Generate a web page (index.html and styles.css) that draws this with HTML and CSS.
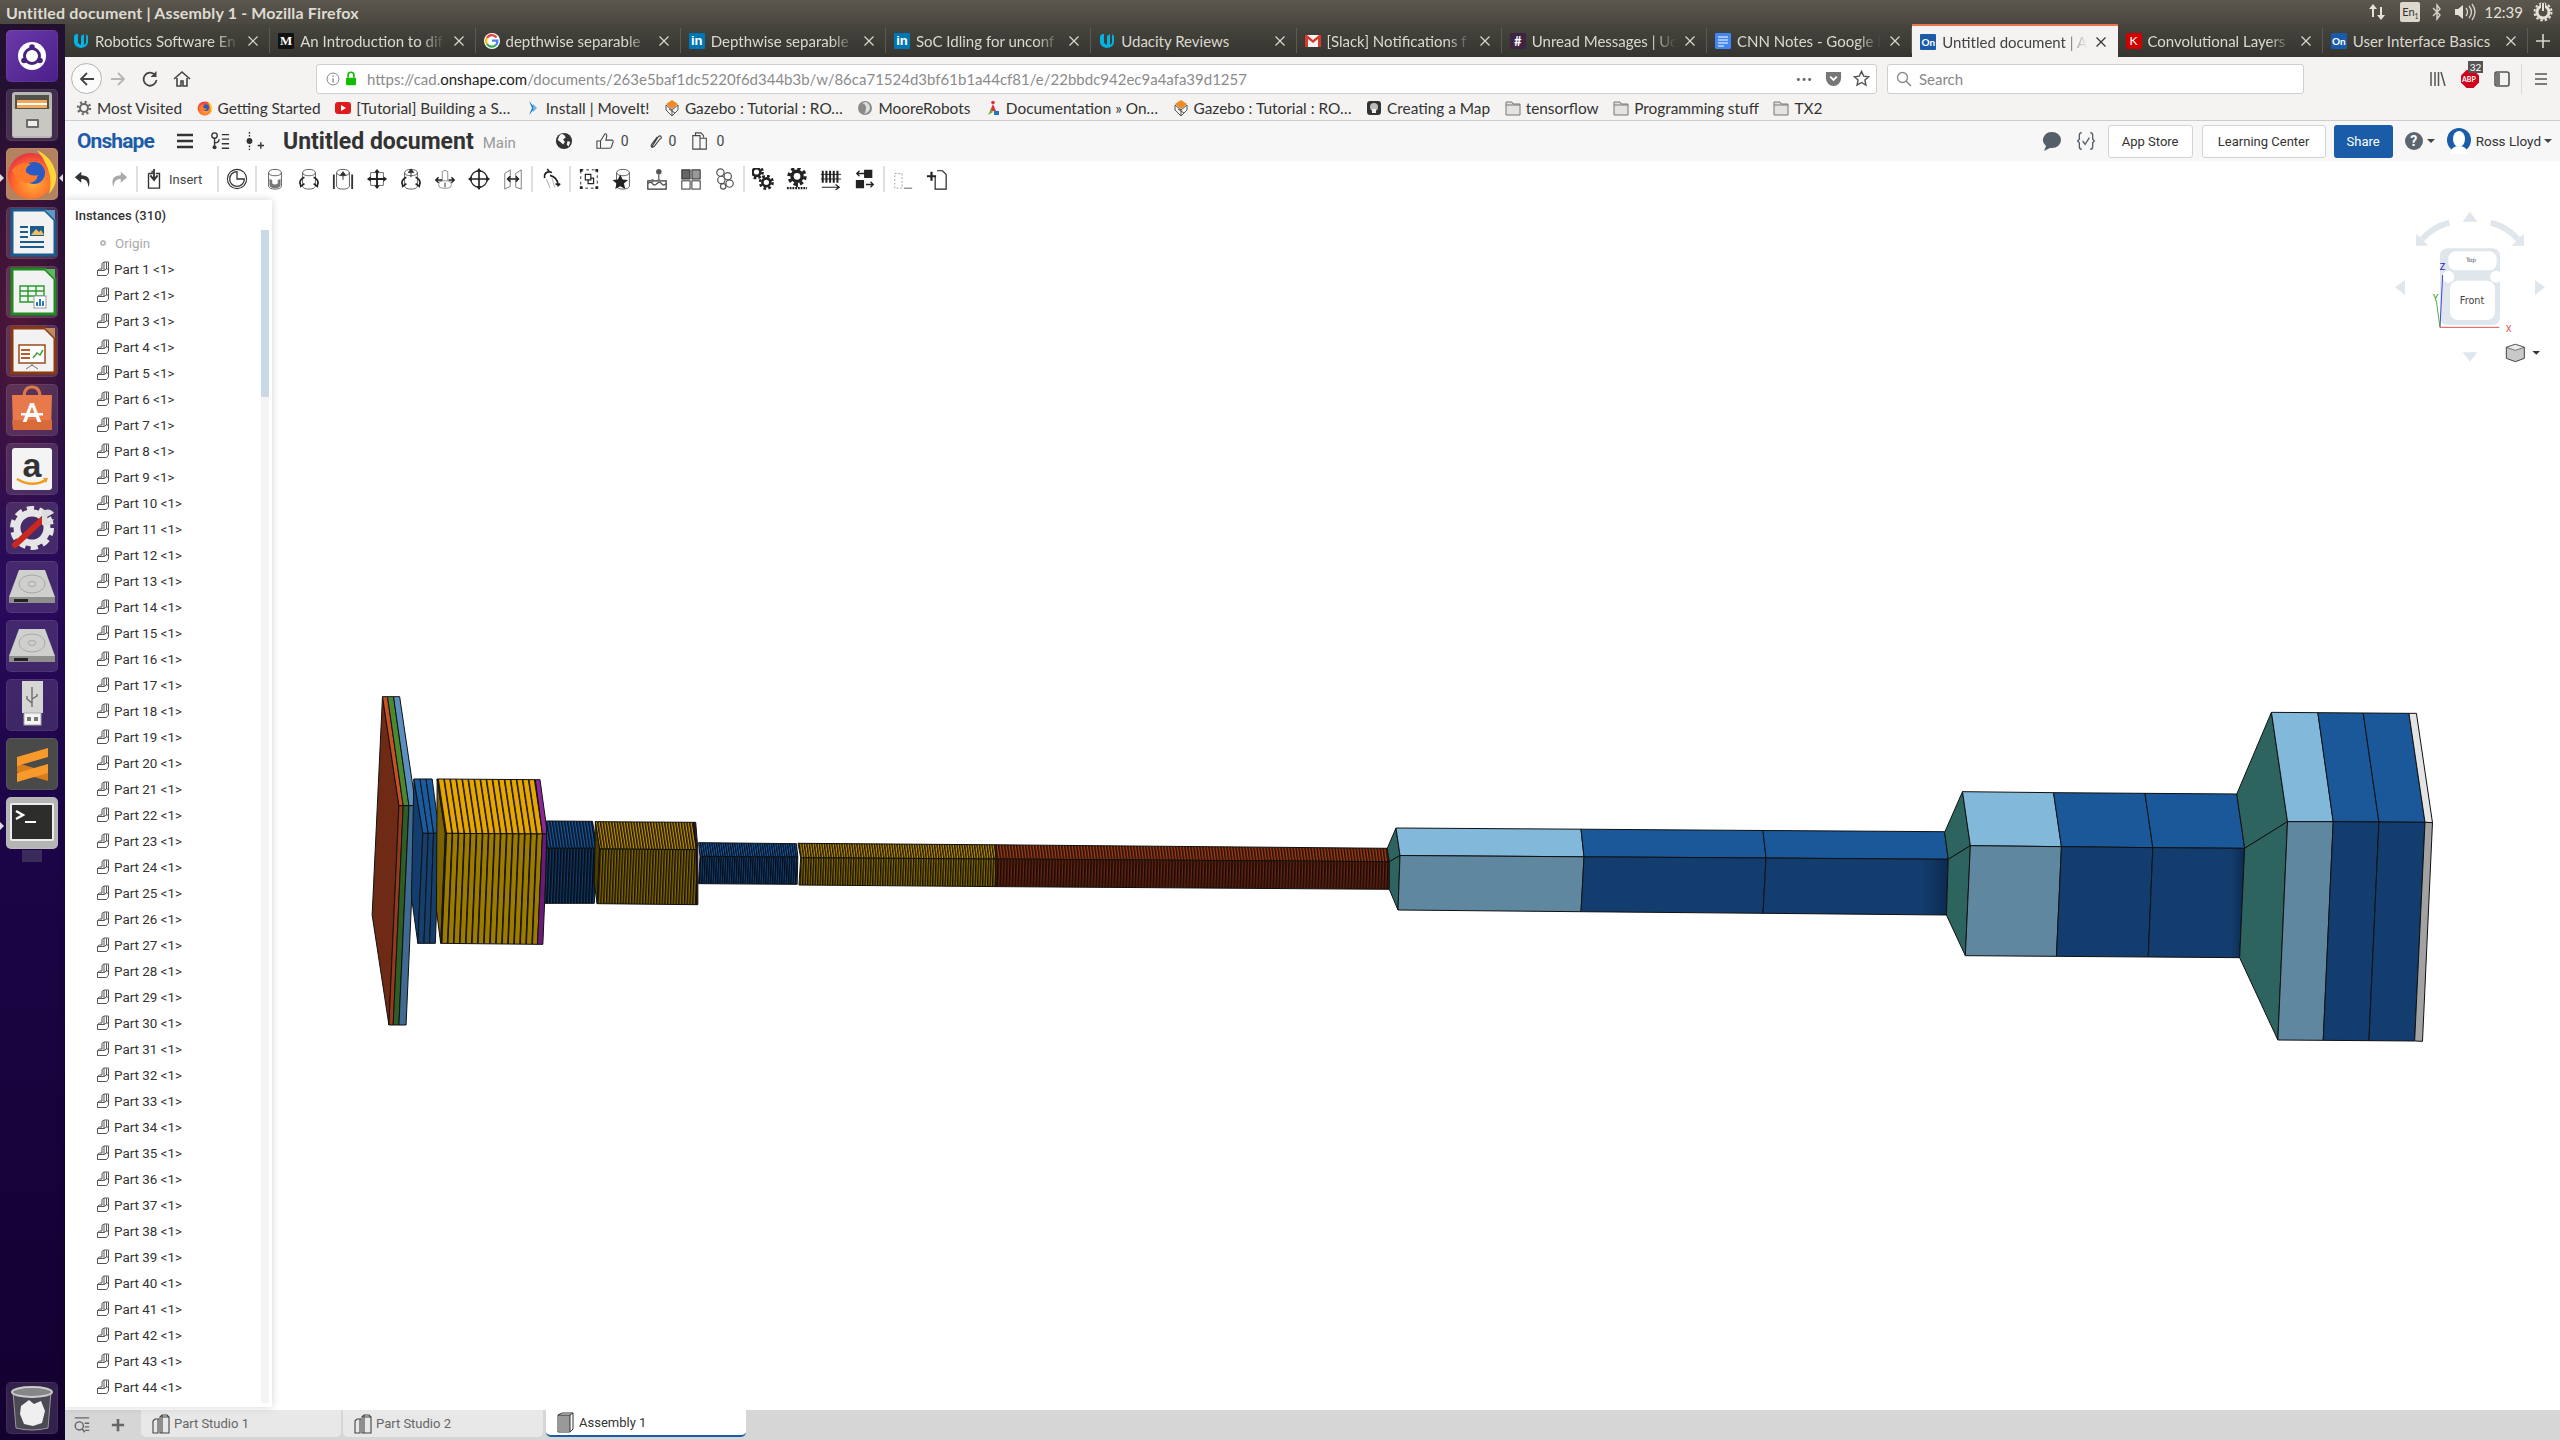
FILE: index.html
```html
<!DOCTYPE html>
<html lang="en">
<head>
    <meta charset="UTF-8">
    <title>Untitled document | Assembly 1 - Mozilla Firefox</title>
    <link rel="stylesheet" href="styles.css">
</head>
<body>
    <div class="titlebar">
        <span class="window-title">Untitled document | Assembly 1 - Mozilla Firefox</span>
        <div class="tray">
            <svg class="tray-updown" viewBox="0 0 18 18"><path d="M5 1 1 6h3v8h2V6h3zM13 17l4-5h-3V4h-2v8H9z" fill="#e4e1d8"/></svg>
            <span class="tray-lang">En<sub>1</sub></span>
            <svg class="tray-bt" viewBox="0 0 10 18"><path d="M1 5l7 7-3 4V2l3 4-7 7" fill="none" stroke="#d8d5cc" stroke-width="1.4"/></svg>
            <svg class="tray-vol" viewBox="0 0 22 18"><path d="M1 6h3l5-4v14l-5-4H1z" fill="#e4e1d8"/><path d="M12 5q3 4 0 8M15 3q5 6 0 12M18 1q6 8 0 16" fill="none" stroke="#d8d5cc" stroke-width="1.3"/></svg>
            <span class="tray-clock">12:39</span>
            <svg class="tray-power" viewBox="0 0 20 20"><circle cx="10" cy="10" r="6" fill="none" stroke="#e4e1d8" stroke-width="3"/><circle cx="10" cy="10" r="8.5" fill="none" stroke="#e4e1d8" stroke-width="2" stroke-dasharray="2.5 2"/><path d="M10 1v8" stroke="#4d4b44" stroke-width="4"/><path d="M10 1v8" stroke="#e4e1d8" stroke-width="2"/></svg>
        </div>
    </div>

    <div class="desk">
        <nav class="launcher">
            <div class="tile tile-ubuntu"><svg viewBox="0 0 52 52"><circle cx="26" cy="26" r="14" fill="#fff"/><circle cx="26" cy="26" r="7.5" fill="none" stroke="#4a2380" stroke-width="3"/><circle cx="26" cy="17" r="2.8" fill="#4a2380"/><circle cx="18" cy="30.5" r="2.8" fill="#4a2380"/><circle cx="34" cy="30.5" r="2.8" fill="#4a2380"/></svg></div>
            <div class="tile"><svg viewBox="0 0 52 52"><rect x="6" y="3" width="40" height="46" rx="3" fill="#b9b7b2"/><rect x="9" y="6" width="34" height="14" fill="#55504a"/><rect x="11" y="11" width="30" height="8" fill="#eea95a"/><rect x="11" y="14" width="30" height="2" fill="#fff"/><path d="M7 20h38v27H7z" fill="#c9c7c2"/><rect x="20" y="30" width="13" height="9" rx="1" fill="#6d6b68"/><rect x="22" y="32" width="9" height="5" fill="#eee"/></svg></div>
            <div class="tile tile-firefox"><svg viewBox="0 0 52 52"><use href="#i-firefox"/></svg></div>
            <div class="tile"><svg viewBox="0 0 52 52"><use href="#i-sheet" class="writer"/><path d="M39 3l10 10V3z" fill="#5b9ac8"/><rect x="14" y="19" width="8" height="2" fill="#1b5c8c"/><rect x="14" y="24" width="8" height="2" fill="#1b5c8c"/><rect x="14" y="29" width="8" height="2" fill="#1b5c8c"/><rect x="24" y="19" width="14" height="10" fill="#1b5c8c"/><path d="M25 28l5-6 3 3 2-2 3 5z" fill="#f0c060"/><rect x="14" y="34" width="24" height="2" fill="#1b5c8c"/><rect x="14" y="39" width="24" height="2" fill="#1b5c8c"/></svg></div>
            <div class="tile"><svg viewBox="0 0 52 52"><use href="#i-sheet" class="calc"/><path d="M39 3l10 10V3z" fill="#5cb85c"/><path d="M14 20h24v16H14zM14 25h24M14 30h24M22 20v16M30 20v16" fill="none" stroke="#2b9a2b" stroke-width="1.4"/><rect x="28" y="30" width="12" height="12" fill="#fff" stroke="#999"/><path d="M31 40v-4M34 40v-7M37 40v-5" stroke="#2a7ab8" stroke-width="2"/></svg></div>
            <div class="tile"><svg viewBox="0 0 52 52"><use href="#i-sheet" class="impress"/><path d="M39 3l10 10V3z" fill="#c08a60"/><rect x="13" y="20" width="26" height="18" fill="#fff" stroke="#9c4a1c" stroke-width="1.5"/><rect x="15" y="24" width="9" height="2" fill="#b5602c"/><rect x="15" y="28" width="9" height="2" fill="#b5602c"/><rect x="15" y="32" width="9" height="2" fill="#b5602c"/><path d="M27 33l4-5 3 2 3-5" fill="none" stroke="#4a9a3a" stroke-width="1.5"/><path d="M26 38v3M26 40l-6 4M26 40l6 4" stroke="#777"/></svg></div>
            <div class="tile"><svg viewBox="0 0 52 52"><path d="M18 13q0-10 8-10t8 10" fill="none" stroke="#d97a48" stroke-width="3"/><path d="M6 11h40l-1 35H7z" fill="#e8794a"/><path d="M6 36h40v10H7z" fill="#d96a3a"/><text x="26" y="38" class="software-a">A</text><rect x="15" y="29" width="22" height="2.5" fill="#fff"/></svg></div>
            <div class="tile"><svg viewBox="0 0 52 52"><rect x="6" y="5" width="40" height="42" rx="3" fill="#f4f4f4"/><text x="26" y="34" class="amazon-a">a</text><path d="M11 36q15 9 29 1" fill="none" stroke="#f39a1e" stroke-width="2.5"/><path d="M37 35l5 0-2 5z" fill="#f39a1e"/></svg></div>
            <div class="tile"><svg viewBox="0 0 52 52"><circle cx="26" cy="26" r="15" fill="none" stroke="#e6e6e6" stroke-width="7"/><circle cx="26" cy="26" r="19" fill="none" stroke="#e6e6e6" stroke-width="6" stroke-dasharray="7 5"/><path d="M9 43 38 16" stroke="#c8281e" stroke-width="6" stroke-linecap="round"/><path d="M36 9q8-4 12 2l-7 4 1 4 6-2q-3 8-12 6z" fill="#ddd"/></svg></div>
            <div class="tile"><svg viewBox="0 0 52 52"><use href="#i-drive"/></svg></div>
            <div class="tile"><svg viewBox="0 0 52 52"><use href="#i-drive"/></svg></div>
            <div class="tile"><svg viewBox="0 0 52 52"><rect x="16" y="2" width="21" height="32" fill="#d6d6d4"/><rect x="18" y="34" width="17" height="12" fill="#f4f4f4" stroke="#aaa"/><rect x="21" y="38" width="4" height="4" fill="#777"/><rect x="28" y="38" width="4" height="4" fill="#777"/><path d="M26 8v20M26 24l-5-4v-3M26 20l5-3v-2" stroke="#666" fill="none" stroke-width="1.3"/></svg></div>
            <div class="tile tile-sublime"><svg viewBox="0 0 52 52"><path d="M11 25 42 34v9L11 34z" fill="#d97c1a"/><path d="M11 19 42 10v9L11 28z" fill="#f79a2b"/><path d="M11 35 42 26v9L11 44z" fill="#f79a2b"/></svg></div>
            <div class="tile tile-terminal"><svg viewBox="0 0 52 52"><rect x="4" y="6" width="44" height="38" rx="2" fill="#ececec"/><rect x="6" y="8" width="40" height="34" fill="#2d2d2b"/><path d="M10 14l7 4-7 4" fill="none" stroke="#fff" stroke-width="2.4"/><rect x="19" y="24" width="11" height="2" fill="#fff"/></svg></div>
            <div class="tile tile-trash"><svg viewBox="0 0 52 52"><path d="M7 10h38l-3 36q-16 4-32 0z" fill="#4a4a52" stroke="#999"/><ellipse cx="26" cy="10" rx="20" ry="5" fill="#85858a" stroke="#ccc" stroke-width="2"/><path d="M15 24l8-6 5 4 7-3 4 10-3 12-9 3-9-2-4-10z" fill="#efefef"/></svg></div>
            <i class="pip pip-left pip-firefox"></i>
            <i class="pip pip-right pip-firefox"></i>
            <i class="pip pip-left pip-terminal"></i>
            <i class="term-tag"></i>
        </nav>

        <div class="browser">
            <div class="tabstrip">
                <div class="tab"><svg class="fav" viewBox="0 0 16 16"><use href="#f-udacity"/></svg><span class="tab-label">Robotics Software En</span><svg class="tab-x" viewBox="0 0 10 10"><use href="#i-x"/></svg></div>
                <div class="tab"><span class="fav fav-medium">M</span><span class="tab-label">An Introduction to dif</span><svg class="tab-x" viewBox="0 0 10 10"><use href="#i-x"/></svg></div>
                <div class="tab"><svg class="fav" viewBox="0 0 16 16"><circle cx="8" cy="8" r="8" fill="#fff"/><path d="M12.5 4.5A5.6 5.6 0 0 0 3 5" fill="none" stroke="#ea4335" stroke-width="2.2"/><path d="M3 5a5.6 5.6 0 0 0 0 6" fill="none" stroke="#fbbc05" stroke-width="2.2"/><path d="M3 11a5.6 5.6 0 0 0 9 .8" fill="none" stroke="#34a853" stroke-width="2.2"/><path d="M8 7.6h5.4q0 3-1.4 4.4" fill="none" stroke="#4285f4" stroke-width="2.2"/></svg><span class="tab-label">depthwise separable</span><svg class="tab-x" viewBox="0 0 10 10"><use href="#i-x"/></svg></div>
                <div class="tab"><span class="fav fav-in">in</span><span class="tab-label">Depthwise separable</span><svg class="tab-x" viewBox="0 0 10 10"><use href="#i-x"/></svg></div>
                <div class="tab"><span class="fav fav-in">in</span><span class="tab-label">SoC Idling for unconf</span><svg class="tab-x" viewBox="0 0 10 10"><use href="#i-x"/></svg></div>
                <div class="tab"><svg class="fav" viewBox="0 0 16 16"><use href="#f-udacity"/></svg><span class="tab-label tab-label-full">Udacity Reviews</span><svg class="tab-x" viewBox="0 0 10 10"><use href="#i-x"/></svg></div>
                <div class="tab"><svg class="fav" viewBox="0 0 16 16"><rect y="2" width="16" height="12" fill="#f4f4f4"/><path d="M0 2v12h3V6l5 4 5-4v8h3V2h-2L8 7 2 2z" fill="#d9382c"/></svg><span class="tab-label">[Slack] Notifications f</span><svg class="tab-x" viewBox="0 0 10 10"><use href="#i-x"/></svg></div>
                <div class="tab"><span class="fav fav-slack">#</span><span class="tab-label">Unread Messages | Uc</span><svg class="tab-x" viewBox="0 0 10 10"><use href="#i-x"/></svg></div>
                <div class="tab"><svg class="fav" viewBox="0 0 16 16"><rect width="16" height="16" rx="1" fill="#4285f4"/><path d="M3 4h10M3 7h10M3 10h10M3 13h6" stroke="#fff" stroke-width="1.2"/></svg><span class="tab-label">CNN Notes - Google D</span><svg class="tab-x" viewBox="0 0 10 10"><use href="#i-x"/></svg></div>
                <div class="tab tab-active"><span class="fav fav-on">On</span><span class="tab-label">Untitled document | A</span><svg class="tab-x" viewBox="0 0 10 10"><use href="#i-x"/></svg></div>
                <div class="tab"><span class="fav fav-k">K</span><span class="tab-label">Convolutional Layers</span><svg class="tab-x" viewBox="0 0 10 10"><use href="#i-x"/></svg></div>
                <div class="tab"><span class="fav fav-on">On</span><span class="tab-label tab-label-full">User Interface Basics</span><svg class="tab-x" viewBox="0 0 10 10"><use href="#i-x"/></svg></div>
                <svg class="tab-new" viewBox="0 0 14 14"><path d="M7 0v14M0 7h14" stroke="#d8d5cc" stroke-width="1.6"/></svg>
            </div>

            <div class="navbar">
                <div class="nav-back"><svg viewBox="0 0 18 18"><path d="M16 9H3M9 3 3 9l6 6" fill="none" stroke="#444" stroke-width="1.8"/></svg></div>
                <svg class="nav-icon nav-forward" viewBox="0 0 18 18"><path d="M2 9h13M9 3l6 6-6 6" fill="none" stroke="#b5b5b5" stroke-width="1.8"/></svg>
                <svg class="nav-icon nav-reload" viewBox="0 0 18 18"><path d="M14 5a6.5 6.5 0 1 0 1.5 5" fill="none" stroke="#444" stroke-width="1.8"/><path d="M15.5 1v6h-6" fill="#444"/></svg>
                <svg class="nav-icon nav-home" viewBox="0 0 18 18"><path d="M1 9l8-7 8 7M4 8v8h4v-5h2v5h4V8" fill="none" stroke="#444" stroke-width="1.6"/></svg>
                <div class="urlbar">
                    <svg class="url-info" viewBox="0 0 16 16"><circle cx="8" cy="8" r="6.8" fill="none" stroke="#777"/><path d="M8 7v5M8 4v1.6" stroke="#777" stroke-width="1.3"/></svg>
                    <svg class="url-lock" viewBox="0 0 14 18"><path d="M3.5 8V5a3.5 3.5 0 0 1 7 0v3" fill="none" stroke="#12bc00" stroke-width="2"/><rect x="1" y="8" width="12" height="9" rx="1" fill="#12bc00"/></svg>
                    <span class="url-text">https://cad.<b>onshape.com</b>/documents/263e5baf1dc5220f6d344b3b/w/86ca71524d3bf61b1a44cf81/e/22bbdc942ec9a4afa39d1257</span>
                    <span class="url-dots">•••</span>
                    <svg class="url-pocket" viewBox="0 0 18 18"><path d="M1 2h16v7a8 8 0 0 1-16 0z" fill="#777"/><path d="M5.5 7 9 10.5 12.5 7" fill="none" stroke="#fff" stroke-width="2"/></svg>
                    <svg class="url-star" viewBox="0 0 18 18"><path d="M9 1.500l2.300 5 5.200.6-3.900 3.500 1.100 5.300L9 13.200 4.300 15.900l1.100-5.300L1.500 7.100l5.200-.6z" fill="none" stroke="#555" stroke-width="1.5"/></svg>
                </div>
                <div class="searchbar">
                    <svg viewBox="0 0 16 16"><circle cx="6.5" cy="6.5" r="5" fill="none" stroke="#888" stroke-width="1.3"/><path d="M10 10l5 5" stroke="#888" stroke-width="1.5"/></svg>
                    <span>Search</span>
                </div>
                <svg class="nav-icon nav-library" viewBox="0 0 18 18"><path d="M2 2v14M6 2v14M9.5 2v14M12 2l4 14" stroke="#555" stroke-width="1.5" fill="none"/></svg>
                <div class="abp">
                    <svg viewBox="0 0 18 18"><path d="M5.500 0h7L18 5.500v7L12.500 18h-7L0 12.500v-7z" fill="#d0021b"/></svg>
                    <span class="abp-word">ABP</span>
                    <span class="abp-count">32</span>
                </div>
                <svg class="nav-icon nav-sidebar" viewBox="0 0 18 18"><rect x="2" y="2" width="14" height="14" rx="2" fill="none" stroke="#555" stroke-width="1.6"/><rect x="3" y="3" width="4" height="12" fill="#777"/></svg>
                <i class="nav-sep"></i>
                <svg class="nav-icon nav-menu" viewBox="0 0 14 14"><path d="M1 2h12M1 7h12M1 12h12" stroke="#555" stroke-width="1.6"/></svg>
            </div>

            <div class="bookmarks">
                <a class="bm"><svg viewBox="0 0 16 16"><circle cx="8" cy="8" r="4" fill="none" stroke="#666" stroke-width="2"/><circle cx="8" cy="8" r="6" fill="none" stroke="#666" stroke-width="2.5" stroke-dasharray="2 2.7"/></svg>Most Visited</a>
                <a class="bm"><svg viewBox="0 0 52 52"><use href="#i-firefox"/></svg>Getting Started</a>
                <a class="bm"><svg viewBox="0 0 16 16"><rect y="2" width="16" height="12" rx="3" fill="#e01b1b"/><path d="M6 5l5 3-5 3z" fill="#fff"/></svg>[Tutorial] Building a S…</a>
                <a class="bm"><svg viewBox="0 0 16 16"><path d="M4 1l6 7-6 7 3-7z" fill="#2b7bb9"/><path d="M8 4l4 4-4 4z" fill="#64b5e8"/></svg>Install | MoveIt!</a>
                <a class="bm"><svg viewBox="0 0 16 16"><use href="#f-gazebo"/></svg>Gazebo : Tutorial : RO…</a>
                <a class="bm"><svg viewBox="0 0 16 16"><circle cx="8" cy="8" r="7" fill="#8a8a8a"/><path d="M5 3q4 1 4 5t-2 6q6-2 6-6t-4-6z" fill="#ddd"/></svg>MooreRobots</a>
                <a class="bm"><svg viewBox="0 0 16 16"><circle cx="8" cy="2.5" r="1.8" fill="#d33"/><path d="M8 4l3 7H5z" fill="#d33"/><path d="M3 15l3-6 2 3z" fill="#6a4"/><path d="M9 11h5v4H9z" fill="#27b"/></svg>Documentation » On…</a>
                <a class="bm"><svg viewBox="0 0 16 16"><use href="#f-gazebo"/></svg>Gazebo : Tutorial : RO…</a>
                <a class="bm"><svg viewBox="0 0 16 16"><rect x="1" y="1" width="14" height="14" rx="3" fill="#333"/><circle cx="8" cy="7" r="4" fill="#bbb"/><path d="M6 13h4V9H6z" fill="#eee"/></svg>Creating a Map</a>
                <a class="bm"><svg viewBox="0 0 16 16"><use href="#f-folder"/></svg>tensorflow</a>
                <a class="bm"><svg viewBox="0 0 16 16"><use href="#f-folder"/></svg>Programming stuff</a>
                <a class="bm"><svg viewBox="0 0 16 16"><use href="#f-folder"/></svg>TX2</a>
            </div>

            <div class="onshape">
                <header class="doc-bar">
                    <span class="logo">Onshape</span>
                    <svg class="doc-icon doc-menu" viewBox="0 0 16 16"><path d="M0 2h16M0 8h16M0 14h16" stroke="#333" stroke-width="2.4"/></svg>
                    <svg class="doc-icon doc-version" viewBox="0 0 22 22"><circle cx="5" cy="5" r="3" fill="none" stroke="#333" stroke-width="1.5"/><circle cx="5" cy="18" r="2.2" fill="#333"/><path d="M5 8v8M5 13q5 0 5-4" fill="none" stroke="#333" stroke-width="1.5"/><path d="M13 4h8M13 9h8M13 14h8M13 19h8" stroke="#333" stroke-width="1.5"/></svg>
                    <svg class="doc-icon doc-config" viewBox="0 0 22 22"><circle cx="6" cy="11" r="3.2" fill="#333"/><path d="M6 1v5M6 16v5" stroke="#333" stroke-width="1.5" stroke-dasharray="2 1.5"/><path d="M15 16h7M18.5 12.5v7" stroke="#333" stroke-width="1.5"/></svg>
                    <h1 class="doc-name">Untitled document</h1>
                    <span class="doc-branch">Main</span>
                    <svg class="doc-icon doc-globe" viewBox="0 0 20 20"><circle cx="10" cy="10" r="9" fill="#333"/><path d="M7 2q4 1 5 4l-3 2 2 3-2 3-3-3-3-2q1-5 4-7zM14 10l3 1-2 5-2-2z" fill="#f7f7f7"/></svg>
                    <svg class="doc-icon doc-thumb" viewBox="0 0 20 20"><path d="M1 10h4v8H1zM5 10l5-8q2 0 2 2l-1 5h7q1 0 1 2l-2 6q0 1-2 1H5" fill="none" stroke="#444" stroke-width="1.2"/></svg>
                    <span class="doc-count">0</span>
                    <svg class="doc-icon doc-link" viewBox="0 0 16 16"><path d="M5 14 12 3q2-2 3 0T14 5L8 13q-2 2-3 1T5 11l6-8" fill="none" stroke="#444" stroke-width="1.2"/></svg>
                    <span class="doc-count">0</span>
                    <svg class="doc-icon doc-clip" viewBox="0 0 18 20"><path d="M4 4V1h6l3 3v2M1 4h8v15H1zM9 7h7v12H9" fill="none" stroke="#444" stroke-width="1.2"/></svg>
                    <span class="doc-count">0</span>

                    <svg class="doc-icon doc-comment" viewBox="0 0 20 20"><path d="M10 1a9 8 0 0 1 0 16H8l-6 3 2-5A9 8 0 0 1 10 1z" fill="#555f6a"/></svg>
                    <svg class="doc-icon doc-fs" viewBox="0 0 24 24"><path d="M7 2q-3 0-3 3v5l-2 2 2 2v5q0 3 3 3M17 2q3 0 3 3v5l2 2-2 2v5q0 3-3 3" fill="none" stroke="#555f6a" stroke-width="1.6"/><path d="M8 12l3 4 5-8" fill="none" stroke="#555f6a" stroke-width="1.6"/></svg>
                    <button class="btn btn-store">App Store</button>
                    <button class="btn btn-learn">Learning Center</button>
                    <button class="btn btn-share">Share</button>
                    <span class="help">?</span>
                    <i class="caret caret-help"></i>
                    <svg class="avatar" viewBox="0 0 24 26"><ellipse cx="12" cy="12" rx="12" ry="12" fill="#1a5ca8"/><ellipse cx="12" cy="11" rx="6" ry="8" fill="#fff"/><path d="M3 26q1-8 9-8t9 8z" fill="#fff"/></svg>
                    <span class="user">Ross Lloyd</span>
                    <i class="caret"></i>
                </header>

                <div class="toolbar">
                    <button class="tool"><svg viewBox="0 0 24 24"><use href="#t-undo"/></svg></button>
                    <button class="tool tool-off"><svg viewBox="0 0 24 24"><use href="#t-redo"/></svg></button>
                    <i class="tool-sep"></i>
                    <button class="tool tool-insert"><svg viewBox="0 0 24 24"><path d="M6 6h4V3M14 6h4v16H6V6" fill="none" stroke="#333" stroke-width="1.5"/><path d="M12 1v11M8 8l4 5 4-5" fill="none" stroke="#333" stroke-width="2"/></svg>Insert</button>
                    <i class="tool-sep"></i>
                    <button class="tool"><svg viewBox="0 0 24 24"><circle cx="12" cy="12" r="10.5" fill="none" stroke="#333" stroke-width="1.2"/><path d="M12 4a8 8 0 1 0 8 8h-8z" fill="none" stroke="#333" stroke-width="1.4"/></svg></button>
                    <i class="tool-sep"></i>
                    <button class="tool"><svg viewBox="0 0 24 24"><use href="#t-cyl"/><path d="M6 12q6 3 12 0v7q-1 3-6 3t-6-3z" fill="#777"/><path d="M9 13v4q3 2 6 0v-4" fill="#fff"/></svg></button>
                    <button class="tool"><svg viewBox="0 0 24 24"><use href="#t-cyl"/><use href="#t-arrows"/></svg></button>
                    <button class="tool"><svg viewBox="0 0 24 24"><use href="#t-cyl"/><path d="M2 7v16M22 7v16" stroke="#333" stroke-width="2"/><path d="M12 13V5M9 8l3-4 3 4z" stroke="#333" fill="#333"/></svg></button>
                    <button class="tool"><svg viewBox="0 0 24 24"><path d="M5 5h14v14H5zM5 12h14M12 5v14" fill="none" stroke="#666"/><path d="M12 1l-3 4h6zM12 23l-3-4h6zM1 12l4-3v6zM23 12l-4-3v6z" fill="#222"/><path d="M12 4v16M4 12h16" stroke="#222" stroke-width="2"/></svg></button>
                    <button class="tool"><svg viewBox="0 0 24 24"><use href="#t-cyl"/><use href="#t-arrows"/><path d="M12 10V3M9 5l3-4 3 4z" stroke="#333" fill="#333"/></svg></button>
                    <button class="tool"><svg viewBox="0 0 24 24"><path d="M9 14V4q3-3 6 0v10M5 18q0-4 4-4h6q4 0 4 4t-4 4H9q-4 0-4-4z" fill="none" stroke="#888"/><path d="M2 13h7M16 13h6M5 10l-3 3 3 3M19 10l3 3-3 3" fill="none" stroke="#222" stroke-width="1.6"/><path d="M12 16v5" stroke="#222"/></svg></button>
                    <button class="tool"><svg viewBox="0 0 24 24"><circle cx="12" cy="12" r="9" fill="none" stroke="#333" stroke-width="1.5"/><path d="M12 1v22M1 12h22" stroke="#222" stroke-width="1.8"/><path d="M12 0l-3 4h6zM12 24l-3-4h6zM0 12l4-3v6zM24 12l-4-3v6z" fill="#222"/></svg></button>
                    <button class="tool"><svg viewBox="0 0 24 24"><path d="M3 6l6-4v18l-6 3zM21 2l-6 4v15l6 2z" fill="none" stroke="#777"/><path d="M6 12h12M9 9l-3 3 3 3M15 9l3 3-3 3" fill="none" stroke="#222" stroke-width="1.6"/></svg></button>
                    <i class="tool-sep"></i>
                    <button class="tool"><svg viewBox="0 0 24 24"><path d="M5 11q-1-6 5-7l-2-3M10 4l3 1" fill="none" stroke="#222" stroke-width="1.8"/><path d="M11 8q8 2 9 11l2-2M20 19l-3-2" fill="none" stroke="#222" stroke-width="1.8"/><path d="M7 12l4 10M13 11l3 10" stroke="#aaa"/></svg></button>
                    <i class="tool-sep"></i>
                    <button class="tool"><svg viewBox="0 0 24 24"><rect x="3" y="2" width="18" height="20" fill="none" stroke="#222" stroke-dasharray="3 3"/><path d="M2 1h3v3H2zM19 1h3v3h-3zM2 20h3v3H2zM19 20h3v3h-3z" fill="#222"/><path d="M8 7h6v6H8zM11 13v4h6v-6h-3" fill="none" stroke="#222" stroke-width="1.3"/></svg></button>
                    <button class="tool"><svg viewBox="0 0 24 24"><use href="#t-cyl"/><path d="M9 7l2.500 5.500 6 .5-4.500 4 1.500 6L9 20l-5.500 3 1.500-6-4.500-4 6-.5z" fill="#222"/></svg></button>
                    <button class="tool"><svg viewBox="0 0 24 24"><circle cx="14" cy="4" r="3" fill="#555"/><path d="M14 7v6" stroke="#222"/><path d="M2 14h20v9H2z" fill="none" stroke="#333" stroke-width="1.3"/><path d="M2 17q3-3 5 0t5 0 5 0 5 0" fill="none" stroke="#555" stroke-width="1.5"/><circle cx="7" cy="14" r="2" fill="#777"/><circle cx="14" cy="14" r="2" fill="#777"/></svg></button>
                    <button class="tool"><svg viewBox="0 0 24 24"><rect x="2" y="2" width="9" height="10" fill="#666" stroke="#222"/><rect x="13" y="2" width="9" height="10" fill="#999" stroke="#222"/><rect x="2" y="14" width="9" height="9" fill="#fff" stroke="#222"/><rect x="13" y="14" width="9" height="9" fill="#fff" stroke="#222"/></svg></button>
                    <button class="tool"><svg viewBox="0 0 24 24"><g fill="none" stroke="#555" stroke-width="1.3"><circle cx="7" cy="5" r="4"/><circle cx="15" cy="9" r="4"/><circle cx="8" cy="13" r="4"/><circle cx="17" cy="17" r="4"/><circle cx="10" cy="20" r="3"/></g></svg></button>
                    <i class="tool-sep"></i>
                    <button class="tool"><svg viewBox="0 0 24 24"><use href="#t-gear" transform="translate(-3.5 -4) scale(.7)"/><use href="#t-gear" transform="translate(7 7) scale(.72)"/></svg></button>
                    <button class="tool"><svg viewBox="0 0 24 24"><use href="#t-gear" transform="translate(1 -2) scale(.92)"/><path d="M1 22h22" stroke="#222" stroke-width="2.4" stroke-dasharray="2 1"/><path d="M12 16v5" stroke="#222" stroke-width="2"/></svg></button>
                    <button class="tool"><svg viewBox="0 0 24 24"><path d="M3 3v13M7 3v13M11 3v13M15 3v13M19 3v13" stroke="#222" stroke-width="2.2"/><path d="M1 7h22M1 12h22" stroke="#222"/><path d="M2 21h18M17 18l4 3-4 3" fill="none" stroke="#222" stroke-width="1.3"/></svg></button>
                    <button class="tool"><svg viewBox="0 0 24 24"><path d="M11 2h9v9h-9zM2 13h9v9H2z" fill="#222"/><path d="M12 6H4M6 3l-3 3 3 3M13 18h8M18 15l3 3-3 3" fill="none" stroke="#222" stroke-width="1.4"/></svg></button>
                    <i class="tool-sep"></i>
                    <button class="tool"><svg viewBox="0 0 24 24"><rect x="3" y="6" width="8" height="16" fill="none" stroke="#999" stroke-dasharray="2 2"/><path d="M13 22h9" stroke="#555"/></svg></button>
                    <button class="tool"><svg viewBox="0 0 24 24"><path d="M12 3h6l4 4v16H10V9" fill="none" stroke="#222" stroke-width="1.3"/><path d="M1 9h10M6 4v10" stroke="#222" stroke-width="2.4"/></svg></button>
                </div>

                <div class="workspace">
                    <aside class="panel">
                        <div class="panel-title">Instances (310)</div>
                        <ul class="instances">
                            <li class="origin"><i class="origin-dot"></i>Origin</li>
                            <li><svg viewBox="0 0 12 16"><use href="#i-part"/></svg>Part 1 &lt;1&gt;</li>
                            <li><svg viewBox="0 0 12 16"><use href="#i-part"/></svg>Part 2 &lt;1&gt;</li>
                            <li><svg viewBox="0 0 12 16"><use href="#i-part"/></svg>Part 3 &lt;1&gt;</li>
                            <li><svg viewBox="0 0 12 16"><use href="#i-part"/></svg>Part 4 &lt;1&gt;</li>
                            <li><svg viewBox="0 0 12 16"><use href="#i-part"/></svg>Part 5 &lt;1&gt;</li>
                            <li><svg viewBox="0 0 12 16"><use href="#i-part"/></svg>Part 6 &lt;1&gt;</li>
                            <li><svg viewBox="0 0 12 16"><use href="#i-part"/></svg>Part 7 &lt;1&gt;</li>
                            <li><svg viewBox="0 0 12 16"><use href="#i-part"/></svg>Part 8 &lt;1&gt;</li>
                            <li><svg viewBox="0 0 12 16"><use href="#i-part"/></svg>Part 9 &lt;1&gt;</li>
                            <li><svg viewBox="0 0 12 16"><use href="#i-part"/></svg>Part 10 &lt;1&gt;</li>
                            <li><svg viewBox="0 0 12 16"><use href="#i-part"/></svg>Part 11 &lt;1&gt;</li>
                            <li><svg viewBox="0 0 12 16"><use href="#i-part"/></svg>Part 12 &lt;1&gt;</li>
                            <li><svg viewBox="0 0 12 16"><use href="#i-part"/></svg>Part 13 &lt;1&gt;</li>
                            <li><svg viewBox="0 0 12 16"><use href="#i-part"/></svg>Part 14 &lt;1&gt;</li>
                            <li><svg viewBox="0 0 12 16"><use href="#i-part"/></svg>Part 15 &lt;1&gt;</li>
                            <li><svg viewBox="0 0 12 16"><use href="#i-part"/></svg>Part 16 &lt;1&gt;</li>
                            <li><svg viewBox="0 0 12 16"><use href="#i-part"/></svg>Part 17 &lt;1&gt;</li>
                            <li><svg viewBox="0 0 12 16"><use href="#i-part"/></svg>Part 18 &lt;1&gt;</li>
                            <li><svg viewBox="0 0 12 16"><use href="#i-part"/></svg>Part 19 &lt;1&gt;</li>
                            <li><svg viewBox="0 0 12 16"><use href="#i-part"/></svg>Part 20 &lt;1&gt;</li>
                            <li><svg viewBox="0 0 12 16"><use href="#i-part"/></svg>Part 21 &lt;1&gt;</li>
                            <li><svg viewBox="0 0 12 16"><use href="#i-part"/></svg>Part 22 &lt;1&gt;</li>
                            <li><svg viewBox="0 0 12 16"><use href="#i-part"/></svg>Part 23 &lt;1&gt;</li>
                            <li><svg viewBox="0 0 12 16"><use href="#i-part"/></svg>Part 24 &lt;1&gt;</li>
                            <li><svg viewBox="0 0 12 16"><use href="#i-part"/></svg>Part 25 &lt;1&gt;</li>
                            <li><svg viewBox="0 0 12 16"><use href="#i-part"/></svg>Part 26 &lt;1&gt;</li>
                            <li><svg viewBox="0 0 12 16"><use href="#i-part"/></svg>Part 27 &lt;1&gt;</li>
                            <li><svg viewBox="0 0 12 16"><use href="#i-part"/></svg>Part 28 &lt;1&gt;</li>
                            <li><svg viewBox="0 0 12 16"><use href="#i-part"/></svg>Part 29 &lt;1&gt;</li>
                            <li><svg viewBox="0 0 12 16"><use href="#i-part"/></svg>Part 30 &lt;1&gt;</li>
                            <li><svg viewBox="0 0 12 16"><use href="#i-part"/></svg>Part 31 &lt;1&gt;</li>
                            <li><svg viewBox="0 0 12 16"><use href="#i-part"/></svg>Part 32 &lt;1&gt;</li>
                            <li><svg viewBox="0 0 12 16"><use href="#i-part"/></svg>Part 33 &lt;1&gt;</li>
                            <li><svg viewBox="0 0 12 16"><use href="#i-part"/></svg>Part 34 &lt;1&gt;</li>
                            <li><svg viewBox="0 0 12 16"><use href="#i-part"/></svg>Part 35 &lt;1&gt;</li>
                            <li><svg viewBox="0 0 12 16"><use href="#i-part"/></svg>Part 36 &lt;1&gt;</li>
                            <li><svg viewBox="0 0 12 16"><use href="#i-part"/></svg>Part 37 &lt;1&gt;</li>
                            <li><svg viewBox="0 0 12 16"><use href="#i-part"/></svg>Part 38 &lt;1&gt;</li>
                            <li><svg viewBox="0 0 12 16"><use href="#i-part"/></svg>Part 39 &lt;1&gt;</li>
                            <li><svg viewBox="0 0 12 16"><use href="#i-part"/></svg>Part 40 &lt;1&gt;</li>
                            <li><svg viewBox="0 0 12 16"><use href="#i-part"/></svg>Part 41 &lt;1&gt;</li>
                            <li><svg viewBox="0 0 12 16"><use href="#i-part"/></svg>Part 42 &lt;1&gt;</li>
                            <li><svg viewBox="0 0 12 16"><use href="#i-part"/></svg>Part 43 &lt;1&gt;</li>
                            <li><svg viewBox="0 0 12 16"><use href="#i-part"/></svg>Part 44 &lt;1&gt;</li>
                        </ul>
                        <div class="scroll-track"><div class="scroll-thumb"></div></div>
                    </aside>

                    <!-- the model: two groups keep the units they were measured in -->
                    <svg class="model" viewBox="340 670 2130 400">
                        <defs>
                            <pattern id="yTop" width="16.9" height="10" patternUnits="userSpaceOnUse" patternTransform="translate(226 0) skewX(8)"><rect width="16.9" height="10" fill="#e6a800"/><rect width="5" height="10" fill="#2a2000"/></pattern>
                            <pattern id="ySide" width="16.9" height="10" patternUnits="userSpaceOnUse" patternTransform="translate(315 0) skewX(-2.3)"><rect width="16.9" height="10" fill="#9c7c00"/><rect width="5" height="10" fill="#1e1800"/></pattern>
                            <pattern id="dbTop" width="8.4" height="10" patternUnits="userSpaceOnUse" patternTransform="skewX(8)"><rect width="8.4" height="10" fill="#1a5a9e"/><rect width="4.6" height="10" fill="#04101e"/></pattern>
                            <pattern id="dbSide" width="8.4" height="10" patternUnits="userSpaceOnUse" patternTransform="skewX(-2.3)"><rect width="8.4" height="10" fill="#123a66"/><rect width="4.6" height="10" fill="#020a14"/></pattern>
                            <pattern id="dyTop" width="7.8" height="10" patternUnits="userSpaceOnUse" patternTransform="skewX(8)"><rect width="7.8" height="10" fill="#c29400"/><rect width="4.4" height="10" fill="#1e1600"/></pattern>
                            <pattern id="dySide" width="7.8" height="10" patternUnits="userSpaceOnUse" patternTransform="skewX(-2.3)"><rect width="7.8" height="10" fill="#846800"/><rect width="4" height="10" fill="#141000"/></pattern>
                            <pattern id="b2Top" width="6.4" height="10" patternUnits="userSpaceOnUse" patternTransform="skewX(8)"><rect width="6.4" height="10" fill="#1a5a9e"/><rect width="3.6" height="10" fill="#04101e"/></pattern>
                            <pattern id="b2Side" width="6.4" height="10" patternUnits="userSpaceOnUse" patternTransform="skewX(-2.3)"><rect width="6.4" height="10" fill="#133c6c"/><rect width="3.6" height="10" fill="#030b16"/></pattern>
                            <pattern id="y2Top" width="2.5" height="10" patternUnits="userSpaceOnUse" patternTransform="skewX(8)"><rect width="2.5" height="10" fill="#c29400"/><rect width="1.4" height="10" fill="#1e1600"/></pattern>
                            <pattern id="y2Side" width="2.5" height="10" patternUnits="userSpaceOnUse" patternTransform="skewX(-2.3)"><rect width="2.5" height="10" fill="#846800"/><rect width="1.3" height="10" fill="#141000"/></pattern>
                            <pattern id="rTop" width="3" height="10" patternUnits="userSpaceOnUse" patternTransform="skewX(8)"><rect width="3" height="10" fill="#a5421a"/><rect width="1.7" height="10" fill="#2a0e04"/></pattern>
                            <pattern id="rSide" width="3" height="10" patternUnits="userSpaceOnUse" patternTransform="skewX(-2.3)"><rect width="3" height="10" fill="#642610"/><rect width="1.6" height="10" fill="#1a0804"/></pattern>
                            <linearGradient id="shadeDark" x1="0" x2="1" y1="0" y2="0"><stop offset=".86" stop-color="#133d6e"/><stop offset="1" stop-color="#0c2a50"/></linearGradient>
                        </defs>

                        <g transform="translate(340 670) scale(.35714 .33333)">
                            <polygon fill="#6e2a14" points="119,80 165,407 137,1065 90,735"/>
                            <polygon fill="#c94f24" points="119,80 133,80 177,407 165,407"/>
                            <polygon fill="#96391a" points="165,407 177,407 149,1065 137,1065"/>
                            <polygon fill="#4a8a2c" points="133,80 150,80 193,407 177,407"/>
                            <polygon fill="#2f5e24" points="177,407 193,407 165,1065 149,1065"/>
                            <polygon fill="#5a8fc0" points="150,80 167,80 212,407 193,407"/>
                            <polygon fill="#3f6a92" points="193,407 212,407 185,1065 165,1065"/>

                            <polygon fill="#133d6e" points="207,327 232,490 218,820 200,680"/>
                            <polygon fill="#1a5a9e" points="207,327 224,327 247,490 232,490"/>
                            <polygon fill="#1a5a9e" points="224,327 241,327 262,490 247,490"/>
                            <polygon fill="#1a5a9e" points="241,327 258,327 278,490 262,490"/>
                            <polygon fill="#153f6e" points="232,490 247,490 235,820 218,820"/>
                            <polygon fill="#153f6e" points="247,490 262,490 251,820 235,820"/>
                            <polygon fill="#153f6e" points="262,490 278,490 267,820 251,820"/>

                            <polygon fill="#7a6200" points="272,327 295,490 282,820 270,720"/>
                            <polygon fill="url(#yTop)" points="272,327 547,329 567,492 295,490"/>
                            <polygon fill="url(#ySide)" points="295,490 567,492 553,823 282,820"/>
                            <polygon fill="#8a2a9a" points="547,329 560,329 581,492 567,492"/>
                            <polygon fill="#6a1a78" points="567,492 581,492 568,823 553,823"/>

                            <polygon fill="url(#dbTop)" points="578,453 707,454 720,535 578,535"/>
                            <polygon fill="url(#dbSide)" points="578,535 720,535 712,700 574,700"/>
                            <polygon fill="#4c3c00" points="715,455 727,537 720,701 712,640"/>
                            <polygon fill="url(#dyTop)" points="715,455 990,457 998,539 727,537"/>
                            <polygon fill="url(#dySide)" points="727,537 998,539 998,704 720,701"/>
                            <polygon fill="#3a0f44" points="990,457 996,457 1002,539 1002,704 998,704 998,539"/>
                            <polygon fill="url(#b2Top)" points="1004,518 1278,521 1282,561 1008,559"/>
                            <polygon fill="url(#b2Side)" points="1008,559 1282,561 1280,643 1004,641"/>
                        </g>

                        <polygon fill="url(#y2Top)" points="798,843.3 996,844.8 996,859 800.7,857.7"/>
                        <polygon fill="url(#y2Side)" points="800.7,857.7 996,859 996,886.6 799,885"/>
                        <polygon fill="url(#rTop)" points="996,844.8 1387.3,848.3 1389.3,861.7 996,859"/>
                        <polygon fill="url(#rSide)" points="996,859 1389.3,861.7 1389.3,889.3 996,886.6"/>

                        <polygon fill="#2e6460" points="1387.3,848.3 1396,828 1400,855.5 1389.3,861.7"/>
                        <polygon fill="#2e6460" points="1389.3,861.7 1400,855.5 1398,910 1389.3,889.3"/>
                        <polygon fill="#82b8d9" points="1396,828 1581,829.2 1584,856.8 1400,855.5"/>
                        <polygon fill="#5f879f" points="1400,855.5 1584,856.8 1581,911.7 1398,910"/>
                        <polygon fill="#1a5899" points="1581,829.2 1763,830.5 1766,858 1584,856.8"/>
                        <polygon fill="#133d6e" points="1584,856.8 1766,858 1763,913.3 1581,911.7"/>
                        <polygon fill="#1a5899" points="1763,830.5 1944.6,831.7 1948.2,859.3 1766,858"/>
                        <polygon fill="url(#shadeDark)" points="1766,858 1948.2,859.3 1946.4,915 1763,913.3"/>

                        <g transform="translate(1900 680) scale(.35714 .33333)">
                            <polygon fill="#2e6460" points="125,457 175,335 197,497 135,538"/>
                            <polygon fill="#2e6460" points="135,538 197,497 183,827 130,705"/>
                            <polygon fill="#82b8d9" points="175,335 430,338 452,500 197,497"/>
                            <polygon fill="#5f879f" points="197,497 452,500 438,829 183,827"/>
                            <polygon fill="#1a5899" points="430,338 686,340 708,503 452,500"/>
                            <polygon fill="#133d6e" points="452,500 708,503 695,831 438,829"/>
                            <polygon fill="#1a5899" points="686,340 943,342 965,505 708,503"/>
                            <polygon fill="url(#shadeDark)" points="708,503 965,505 951,833 695,831"/>
                            <polygon fill="#2e6460" points="943,342 1040,97 1085,425 965,505"/>
                            <polygon fill="#2e6460" points="965,505 1085,425 1058,1080 951,833"/>
                            <polygon fill="#82b8d9" points="1040,97 1170,98 1213,425 1085,425"/>
                            <polygon fill="#5f879f" points="1085,425 1213,425 1185,1081 1058,1080"/>
                            <polygon fill="#1a5899" points="1170,98 1297,99 1341,426 1213,425"/>
                            <polygon fill="#133d6e" points="1213,425 1341,426 1313,1082 1185,1081"/>
                            <polygon fill="#1a5899" points="1297,99 1425,100 1470,427 1341,426"/>
                            <polygon fill="#133d6e" points="1341,426 1470,427 1441,1083 1313,1082"/>
                            <polygon fill="#e4e4e4" points="1425,100 1446,100 1491,428 1470,427"/>
                            <polygon fill="#a2a2a2" points="1470,427 1491,428 1463,1084 1441,1083"/>
                        </g>
                    </svg>

                    <svg class="navcube" viewBox="0 0 600 570">
                        <g fill="#dfe6ec">
                            <path d="M330 65l-22 30h44zM105 292l30-22v45zM555 292l-30-22v45zM330 515l-22-28h44z"/>
                            <path d="M168 167l1-36 36 36z"/>
                            <path d="M492 167l-1-36-36 36z"/>
                            <path d="M240 200q0-25 25-25h130q25 0 25 25v180q0 25-25 25H265q-25 0-25-25z"/>
                        </g>
                        <path d="M268 98q-50 13-82 50M392 98q50 13 82 50" fill="none" stroke="#dfe6ec" stroke-width="18"/>
                        <rect x="265" y="184" width="145" height="57" rx="22" fill="#fff"/>
                        <rect x="270" y="272" width="135" height="118" rx="24" fill="#fff"/>
                        <circle cx="265" cy="260" r="18" fill="#fff"/>
                        <circle cx="408" cy="260" r="18" fill="#fff"/>
                        <text x="333" y="216" class="cube-top">Top</text>
                        <text x="336" y="341" class="cube-front">Front</text>
                        <path d="M240 412 248 255" stroke="#2222dd" stroke-width="2.5"/>
                        <path d="M240 412 229 332" stroke="#2ca02c" stroke-width="2.5"/>
                        <path d="M240 412H418" stroke="#e25555" stroke-width="3"/>
                        <text x="248" y="240" class="axis axis-z">Z</text>
                        <text x="227" y="332" class="axis axis-y">Y</text>
                        <text x="446" y="427" class="axis axis-x">X</text>
                        <path d="M466 463l27 9v33l-27 10-27-10v-33z" fill="#c9c9c9" stroke="#444" stroke-width="3"/>
                        <path d="M439 472l27 9 27-9-27-9z" fill="#ececec" stroke="#444" stroke-width="2"/>
                        <path d="M517 483h23l-11 11z" fill="#333"/>
                    </svg>
                </div>

                <footer class="tabbar">
                    <svg class="tabbar-icon tabbar-search" viewBox="0 0 20 20"><path d="M2 2h16M13 8h5M13 12h5M13 16h5" stroke="#666" stroke-width="1.5"/><circle cx="7" cy="11" r="4.5" fill="none" stroke="#666" stroke-width="1.6"/><path d="M10 14l3 4" stroke="#666" stroke-width="1.6"/></svg>
                    <svg class="tabbar-icon tabbar-add" viewBox="0 0 16 16"><path d="M8 1v14M1 8h14" stroke="#666" stroke-width="3"/></svg>
                    <div class="sheet"><svg viewBox="0 0 20 22"><use href="#i-studio"/></svg>Part Studio 1</div>
                    <div class="sheet"><svg viewBox="0 0 20 22"><use href="#i-studio"/></svg>Part Studio 2</div>
                    <div class="sheet sheet-active"><svg viewBox="0 0 20 22"><rect x="3" y="3" width="11" height="16" fill="#999"/><path d="M2 3 6 1h11v16l-3 3H2zM2 3h12v17M14 3l3-2" fill="none" stroke="#333"/></svg>Assembly 1</div>
                </footer>
            </div>
        </div>
    </div>

    <svg class="sprites">
        <defs>
            <radialGradient id="foxBody" cx=".55" cy=".65" r=".7"><stop offset="0" stop-color="#ffb03a"/><stop offset=".6" stop-color="#ff6a2b"/><stop offset="1" stop-color="#e2264c"/></radialGradient>
        </defs>
        <symbol id="i-firefox" viewBox="0 0 52 52">
            <circle cx="25" cy="28" r="23" fill="url(#foxBody)"/>
            <circle cx="28" cy="25" r="11" fill="#2a5bc4"/>
            <path d="M31 2q14 7 18 20t-6 24q6-22-12-44z" fill="#ffd53a"/>
            <path d="M6 22q8-9 19-6-6 3-5 8 5 5 12 3-2 9-12 8-10-2-14-13z" fill="#ff7b2b"/>
        </symbol>
        <symbol id="i-sheet" viewBox="0 0 52 52">
            <path d="M6 3h33l10 10v35H6z" fill="#f2f2f2" stroke="currentColor" stroke-width="3"/>
        </symbol>
        <symbol id="i-drive" viewBox="0 0 52 52">
            <path d="M13 9h26l10 27H3z" fill="#cfcfcd"/>
            <path d="M3 36h46v6H3z" fill="#8e8e8c"/>
            <rect x="8" y="38" width="14" height="3" fill="#222"/>
            <ellipse cx="26" cy="23" rx="13" ry="9" fill="none" stroke="#a8a8a6"/>
            <ellipse cx="26" cy="23" rx="4" ry="2.5" fill="none" stroke="#a8a8a6"/>
        </symbol>
        <symbol id="i-x" viewBox="0 0 10 10"><path d="M.5.5l9 9M9.500.5l-9 9" stroke="currentColor" stroke-width="1.2"/></symbol>
        <symbol id="f-udacity" viewBox="0 0 16 16"><path d="M3 1 1 3v6q0 5 7 6 7-1 7-6V3l-2-2v8q0 2-2 3V1L8 3v9Q5 11 5 9V1z" fill="#02b3e4"/></symbol>
        <symbol id="f-gazebo" viewBox="0 0 16 16"><path d="M8 0l6 4-6 5-6-5z" fill="#f08a24"/><path d="M2 5l6 5 6-5v5l-6 6-6-6z" fill="none" stroke="#555"/><path d="M5 9l6 4M8 10v6" stroke="#555"/></symbol>
        <symbol id="f-folder" viewBox="0 0 16 16"><path d="M1 2h6l1 2h7v11H1z" fill="#e4e3e0" stroke="#777"/><path d="M1 5h14" stroke="#777"/></symbol>
        <symbol id="i-part" viewBox="0 0 12 16"><path d="M.5 9.500 2.500 8H5V2.500L7 1h4.500v11l-2 2.500H.5zM.5 9.500h6.500V2.500L7 1M7 9.500 9.500 8V1.500M9.500 8h2" fill="#fff" stroke="#555"/></symbol>
        <symbol id="i-studio" viewBox="0 0 20 22"><path d="M2 8l2-2h3v14H2zM7 6h1M9 4l2-2h5l2 2v16H9zM11 4h7M11 2v18" fill="none" stroke="#444" stroke-width="1.1"/></symbol>
        <symbol id="t-undo" viewBox="0 0 24 24"><path d="M9 4 2 10l7 6v-4c5 0 7 2 8 9 3-9-1-13-8-13z" fill="#333"/></symbol>
        <symbol id="t-redo" viewBox="0 0 24 24"><path d="M15 4l7 6-7 6v-4c-5 0-7 2-8 9-3-9 1-13 8-13z" fill="#aaa"/></symbol>
        <symbol id="t-cyl" viewBox="0 0 24 24"><ellipse cx="12" cy="5" rx="7" ry="3.5" fill="#fff" stroke="#555"/><path d="M5 5v15q1 3 7 3t7-3V5" fill="none" stroke="#555"/></symbol>
        <symbol id="t-arrows" viewBox="0 0 24 24"><path d="M7 10q-5 2-5 7M2 15l1 5 4-3M17 10q5 2 5 7M22 15l-1 5-4-3" fill="none" stroke="#222" stroke-width="1.8"/></symbol>
        <symbol id="t-gear" viewBox="0 0 24 24"><circle cx="12" cy="12" r="6" fill="none" stroke="#222" stroke-width="4"/><circle cx="12" cy="12" r="9.5" fill="none" stroke="#222" stroke-width="4" stroke-dasharray="4 3.46"/></symbol>
    </svg>
</body>
</html>
```

FILE: styles.css
```css
* {
    box-sizing: border-box;
    margin: 0;
    padding: 0;
}

body {
    width: 2560px;
    height: 1440px;
    overflow: hidden;
    font-family: Lato, 'Noto Sans', sans-serif;
    background: #fff;
}

svg {
    display: block;
    flex: none;
}

.sprites {
    width: 0;
    height: 0;
    overflow: hidden;
}

/* window title + tray */
.titlebar {
    height: 24px;
    display: flex;
    align-items: center;
    padding-left: 6px;
    background: linear-gradient(#5a574e, #4a4840);
}

.window-title {
    font-size: 16px;
    font-weight: 700;
    letter-spacing: .15px;
    color: #dfdbd2;
}

.tray {
    margin-left: auto;
    display: flex;
    align-items: center;
    color: #e4e1d8;
    font-size: 15px;
}

.tray-updown { width: 18px; height: 18px; margin-right: 14px; }
.tray-lang {
    width: 20px;
    height: 20px;
    margin-right: 12px;
    background: #dcd8cc;
    border-radius: 2px;
    color: #333;
    font-size: 11px;
    line-height: 20px;
    text-align: center;
}
.tray-lang sub { font-size: 7px; }
.tray-bt { width: 10px; height: 18px; margin-right: 12px; }
.tray-vol { width: 22px; height: 18px; margin-right: 8px; }
.tray-clock { margin-right: 10px; }
.tray-power { width: 20px; height: 20px; margin-right: 7px; }

.desk {
    display: flex;
    height: 1416px;
}

/* launcher */
.launcher {
    position: relative;
    width: 65px;
    flex: none;
    display: flex;
    flex-direction: column;
    gap: 7px;
    padding: 6px 0 6px 6px;
    background:
        radial-gradient(ellipse 60px 220px at 20px 300px, rgba(130, 30, 50, .45), transparent),
        linear-gradient(#23102f 0, #2b1040 25%, #2a0a5c 40%, #1d0548 55%, #140030 100%);
}

.tile {
    width: 52px;
    height: 52px;
    border-radius: 5px;
    background: rgba(255, 255, 255, .13);
    box-shadow: inset 0 0 0 1px rgba(255, 255, 255, .07);
}

.tile svg { width: 52px; height: 52px; }
.tile-ubuntu { background: linear-gradient(135deg, #6a3aa8, #4a1f8a); }
.tile-firefox { background: #b5825f; }
.tile-sublime { background: #4a4a4a; }
.tile-terminal { background: #b5b5b5; }
.tile-trash { margin-top: auto; }

.writer { color: #1b5c8c; }
.calc { color: #1f8a1f; }
.impress { color: #8a3a10; }

.software-a {
    font: 700 26px Lato, sans-serif;
    fill: #fff;
    text-anchor: middle;
}

.amazon-a {
    font: 700 34px 'Liberation Sans', sans-serif;
    fill: #333;
    text-anchor: middle;
}

.pip {
    position: absolute;
    width: 0;
    height: 0;
    border-top: 4px solid transparent;
    border-bottom: 4px solid transparent;
}
.pip-left { left: 0; border-left: 4px solid #ddd; }
.pip-right { left: 59px; border-right: 4px solid #ddd; }
.pip-firefox { top: 150px; }
.pip-terminal { top: 798px; }

.term-tag {
    position: absolute;
    left: 22px;
    top: 826px;
    width: 20px;
    height: 12px;
    background: #3b2a5c;
}

/* firefox chrome */
.browser {
    flex: 1;
    min-width: 0;
    display: flex;
    flex-direction: column;
}

.tabstrip {
    height: 33px;
    flex: none;
    display: flex;
    background: linear-gradient(#47453e, #35342f);
}

.tab {
    width: 205.25px;
    display: flex;
    align-items: center;
    gap: 6px;
    padding: 0 12px 0 8px;
    font-size: 15px;
    color: #dbd8cf;
    position: relative;
}

.tab::after {
    content: '';
    position: absolute;
    right: 0;
    top: 4px;
    bottom: 4px;
    width: 1px;
    background: #5c5a52;
}

.tab-active {
    background: #f4f3f1;
    color: #444;
    border-top: 2px solid #e9764e;
}
.tab-active::after { display: none; }

.tab-label {
    flex: 1;
    min-width: 0;
    white-space: nowrap;
    -webkit-mask-image: linear-gradient(to right, #000 82%, transparent 98%);
    mask-image: linear-gradient(to right, #000 82%, transparent 98%);
}

.tab-label-full {
    -webkit-mask-image: none;
    mask-image: none;
}

.fav {
    width: 16px;
    height: 16px;
    flex: none;
    display: flex;
    align-items: center;
    justify-content: center;
    font-size: 11px;
    font-weight: 700;
    color: #fff;
    border-radius: 1px;
}

.fav-medium { background: #111; font-family: 'Liberation Serif', serif; font-size: 13px; }
.fav-in { background: #0077b5; font-size: 13px; font-family: 'Liberation Sans', sans-serif; }
.fav-slack { background: #3e2440; font-size: 13px; }
.fav-on { background: #1a5ca8; font-size: 10px; }
.fav-k { background: #d00000; font-size: 12px; font-weight: 400; }

.tab-x {
    width: 10px;
    height: 10px;
    color: #dbd8cf;
}
.tab-active .tab-x { color: #333; }

.tab-new {
    width: 14px;
    height: 14px;
    align-self: center;
    margin-left: 8px;
}

.navbar {
    height: 37px;
    flex: none;
    display: flex;
    align-items: center;
    background: #f4f3f1;
    padding: 6px 0 0 6px;
}

.nav-back {
    width: 31px;
    height: 31px;
    flex: none;
    display: flex;
    align-items: center;
    justify-content: center;
    border: 1px solid #b5b5b5;
    border-radius: 50%;
    background: #fbfbfb;
}

.nav-back svg { width: 18px; height: 18px; }

.nav-icon { width: 18px; height: 18px; }
.nav-forward { margin-left: 7px; }
.nav-reload { margin-left: 14px; }
.nav-home { margin-left: 14px; }

.urlbar {
    width: 1561px;
    height: 30px;
    margin-left: 125px;
    display: flex;
    align-items: center;
    background: #fff;
    border: 1px solid #cfcfcf;
    border-radius: 3px;
    padding-left: 9px;
    font-size: 15px;
    color: #8b8b8b;
    flex: none;
}

.url-info { width: 14px; height: 14px; }
.url-lock { width: 12px; height: 15px; margin-left: 5px; }
.url-text { margin-left: 10px; white-space: nowrap; }
.url-text b { font-weight: 400; color: #222; }
.url-dots { margin-left: auto; font-size: 8px; color: #666; letter-spacing: 1px; }
.url-pocket { width: 17px; height: 17px; margin-left: 12px; }
.url-star { width: 17px; height: 17px; margin: 0 6px 0 11px; }

.searchbar {
    width: 417px;
    height: 30px;
    margin-left: 10px;
    display: flex;
    align-items: center;
    gap: 7px;
    flex: none;
    padding-left: 8px;
    background: #fff;
    border: 1px solid #cfcfcf;
    border-radius: 3px;
    color: #888;
    font-size: 15px;
}

.searchbar svg { width: 16px; height: 16px; }

.nav-library { margin-left: 125px; }

.abp {
    position: relative;
    width: 18px;
    height: 18px;
    margin-left: 14px;
    flex: none;
}
.abp svg { width: 18px; height: 18px; }
.abp-word {
    position: absolute;
    left: 1px;
    top: 5px;
    font-size: 7px;
    font-weight: 700;
    color: #fff;
}
.abp-count {
    position: absolute;
    left: 7px;
    top: -9px;
    width: 15px;
    height: 12px;
    background: #555;
    color: #fff;
    font-size: 10px;
    line-height: 12px;
    text-align: center;
}

.nav-sidebar { margin-left: 14px; }
.nav-sep {
    width: 1px;
    height: 30px;
    margin-left: 10px;
    background: #d8d8d8;
}
.nav-menu { width: 14px; height: 14px; margin-left: 12px; }

.bookmarks {
    height: 27px;
    flex: none;
    display: flex;
    align-items: center;
    padding: 2px 0 0 11px;
    gap: 14.5px;
    background: #f4f3f1;
    border-bottom: 1px solid #cfcdcb;
    font-size: 15.4px;
    color: #333;
}

.bm {
    display: flex;
    align-items: center;
    gap: 5px;
    white-space: nowrap;
}

.bm svg { width: 16px; height: 16px; }

/* onshape */
.onshape {
    flex: 1;
    display: flex;
    flex-direction: column;
    min-height: 0;
    font-family: Roboto, sans-serif;
}

.doc-bar {
    height: 40px;
    flex: none;
    display: flex;
    align-items: center;
    padding: 0 8px 0 12px;
    background: #f7f7f7;
    color: #333;
}

.logo {
    width: 79px;
    font-size: 21px;
    font-weight: 700;
    letter-spacing: -.9px;
    color: #1e5ca8;
}

.doc-icon { width: 18px; height: 18px; }
.doc-menu { width: 16px; height: 16px; margin-left: 21px; }
.doc-version { width: 20px; height: 20px; margin-left: 17px; }
.doc-config { width: 20px; height: 20px; margin-left: 14px; }

.doc-name {
    margin-left: 19px;
    font-size: 23px;
    font-weight: 700;
    color: #333;
}

.doc-branch {
    margin-left: 9px;
    padding-top: 4px;
    width: 35px;
    font-size: 15px;
    color: #999;
}

.doc-globe { margin-left: 37px; }
.doc-thumb { margin-left: 23px; }
.doc-link { width: 15px; height: 15px; margin-left: 18px; }
.doc-clip { margin-left: 15px; }

.doc-count {
    margin-left: 7px;
    font-size: 14px;
    color: #444;
}

.doc-comment { width: 20px; height: 20px; margin-left: auto; }
.doc-fs { width: 20px; height: 22px; margin-left: 14px; }

.btn {
    height: 33px;
    border: 1px solid #d3d3d3;
    border-radius: 3px;
    background: #fff;
    color: #333;
    font: 13px Roboto, sans-serif;
}

.btn-store { width: 85px; margin-left: 12px; }
.btn-learn { width: 124px; margin-left: 9px; }
.btn-share {
    width: 59px;
    margin-left: 8px;
    border: 0;
    background: #1a5ca8;
    color: #fff;
}

.help {
    width: 18px;
    height: 18px;
    margin-left: 12px;
    flex: none;
    border-radius: 50%;
    background: #5c6670;
    color: #fff;
    font-size: 14px;
    font-weight: 700;
    line-height: 18px;
    text-align: center;
}

.caret {
    width: 0;
    height: 0;
    flex: none;
    margin-left: 3px;
    border-left: 4px solid transparent;
    border-right: 4px solid transparent;
    border-top: 4px solid #444;
}

.caret-help { margin-left: 4px; }
.avatar { width: 24px; height: 28px; margin-left: 12px; }
.user { margin-left: 5px; font-size: 13.5px; color: #333; }

.toolbar {
    height: 36px;
    flex: none;
    display: flex;
    align-items: center;
    padding-left: 2px;
    background: #fff;
}

.tool {
    width: 34px;
    height: 36px;
    flex: none;
    display: flex;
    align-items: center;
    justify-content: center;
    border: 0;
    background: none;
}

.tool svg { width: 22px; height: 22px; }

.tool-insert {
    width: 77px;
    justify-content: flex-start;
    gap: 4px;
    padding-left: 4px;
    font: 13px Roboto, sans-serif;
    color: #444;
}

.tool-sep {
    width: 2px;
    height: 26px;
    margin: 0 1px;
    background: #e0e0e0;
}

.workspace {
    position: relative;
    flex: 1;
    min-height: 0;
    background: #fff;
}

.panel {
    position: relative;
    width: 207px;
    height: 1207px;
    margin-top: 3px;
    background: #fff;
    box-shadow: 0 0 8px rgba(0, 0, 0, .18);
    font-size: 13px;
    color: #333;
    overflow: hidden;
}

.panel-title {
    height: 30px;
    padding: 2px 0 0 10px;
    line-height: 28px;
    font-weight: 500;
}

.instances { list-style: none; }

.instances li {
    height: 26px;
    display: flex;
    align-items: center;
    gap: 5px;
    padding-left: 32px;
    font-size: 13.4px;
}

.instances svg { width: 12px; height: 16px; }

.origin { color: #aaa; }

.origin-dot {
    width: 6px;
    height: 6px;
    margin: 0 4px 0 3px;
    border-radius: 50%;
    background: #fff;
    border: 2px solid #bbb;
}

.scroll-track {
    position: absolute;
    left: 196px;
    top: 30px;
    bottom: 4px;
    width: 8px;
    background: #f4f4f4;
}

.scroll-thumb {
    height: 167px;
    background: #c9d9e6;
}

.model {
    position: absolute;
    left: 275px;
    top: 473px;
    width: 2130px;
    height: 400px;
}

.model polygon {
    stroke: #111;
    stroke-width: 1;
    stroke-linejoin: round;
    vector-effect: non-scaling-stroke;
}

.navcube {
    position: absolute;
    left: 2295px;
    top: -7px;
    width: 200px;
    height: 190px;
}

.cube-top {
    font: 18px 'DejaVu Sans', sans-serif;
    fill: #555;
    text-anchor: middle;
}

.cube-front {
    font: 29px 'DejaVu Sans', sans-serif;
    fill: #444;
    text-anchor: middle;
}

.axis {
    font: 28px Roboto, sans-serif;
    text-anchor: middle;
}
.axis-z { fill: #2222dd; }
.axis-y { fill: #2ca02c; }
.axis-x { fill: #e25555; }

.tabbar {
    height: 30px;
    flex: none;
    display: flex;
    background: #d6d6d6;
    font-size: 13px;
}

.tabbar-icon { align-self: center; }
.tabbar-search { width: 18px; height: 18px; margin-left: 8px; }
.tabbar-add { width: 14px; height: 14px; margin-left: 20px; }

.sheet {
    width: 200px;
    height: 27px;
    margin-left: 2px;
    display: flex;
    align-items: center;
    gap: 3px;
    padding-left: 10px;
    background: #e8e8e8;
    border-radius: 0 0 5px 5px;
    color: #666;
}

.sheet:first-of-type { margin-left: 16px; }

.sheet svg { width: 20px; height: 22px; }

.sheet-active {
    background: #fff;
    color: #333;
    border-bottom: 2px solid #1a5ca8;
    margin-left: 3px;
}
```
